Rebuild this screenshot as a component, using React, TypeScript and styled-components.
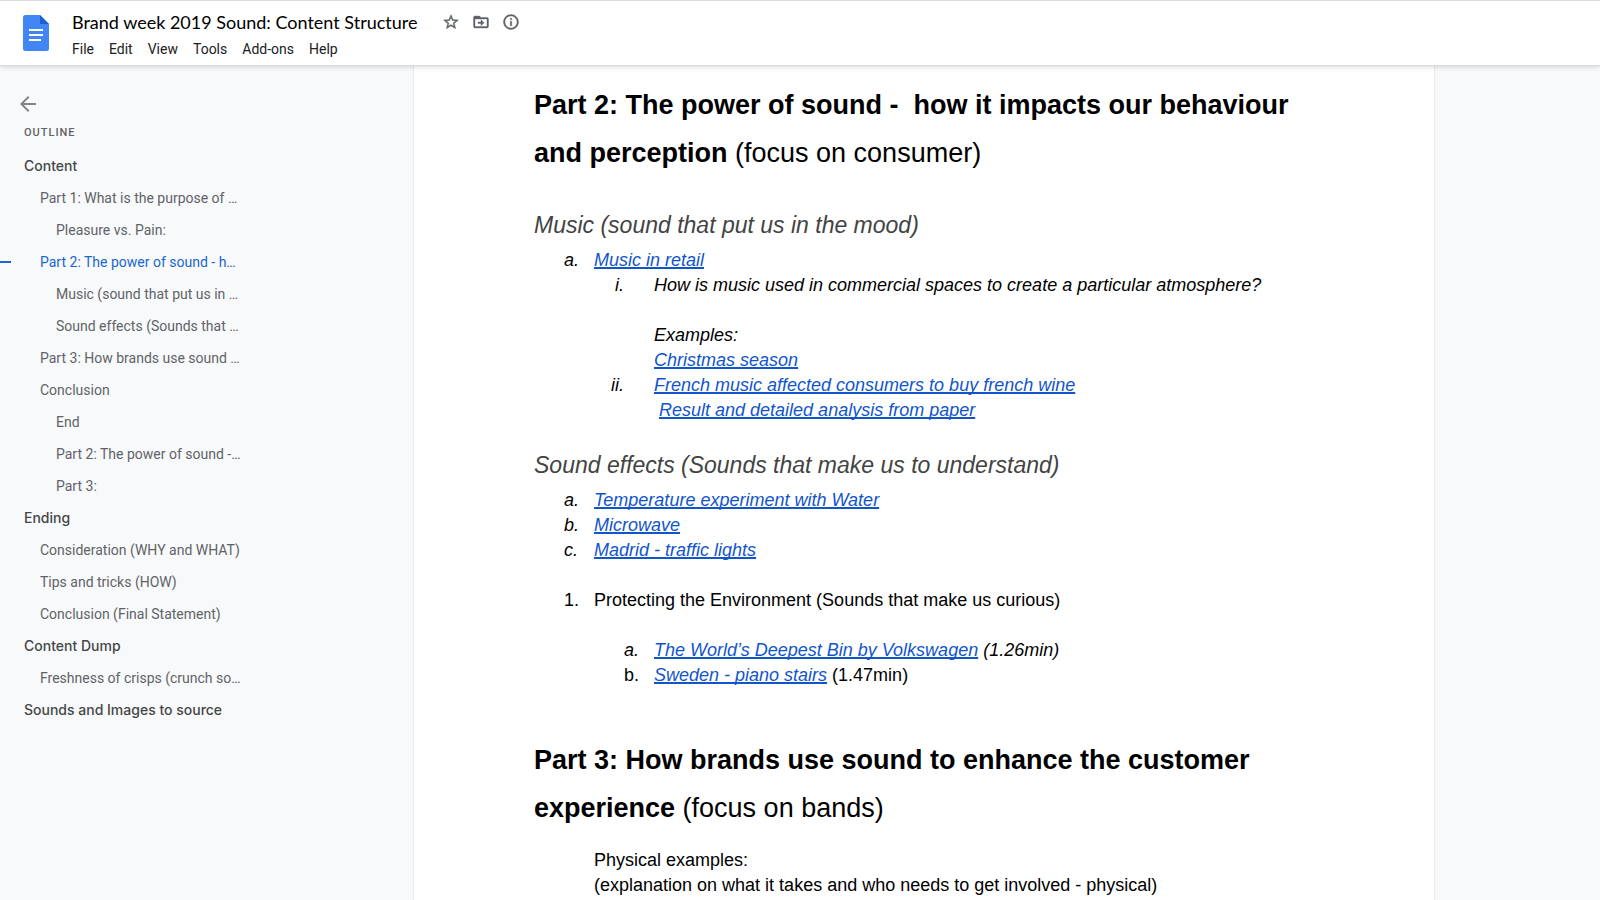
import React from "react";
import styled, { createGlobalStyle } from "styled-components";

const GlobalStyle = createGlobalStyle`
  * { box-sizing: border-box; }
  body { margin: 0; background: #f8f9fa; font-family: Roboto, sans-serif; }
  h1, h2, h3, p, ul, ol { margin: 0; padding: 0; font-weight: 400; }
  ul, ol { list-style: none; }
`;

const Shell = styled.div`
  min-height: 100vh;
  display: flex;
  flex-direction: column;
`;

const Header = styled.header`
  position: relative;
  display: flex;
  align-items: center;
  height: 66px;
  padding: 0 23px;
  gap: 23px;
  background: #fff;
  border-top: 1px solid #dadce0;
  border-bottom: 1px solid #dadce0;
  box-shadow: 0 1px 5px rgba(60, 64, 67, 0.2);
`;

const Logo = styled.svg`
  display: block;
  width: 26px;
  height: 36px;
`;

const TitleBlock = styled.div`
  display: flex;
  flex-direction: column;
  gap: 5px;
  margin-top: 3px;
`;

const TitleRow = styled.div`
  display: flex;
  align-items: center;
  height: 24px;
  gap: 24px;
`;

const Title = styled.h1`
  font: 400 18px/24px Lato, sans-serif;
  color: #000;
  white-space: nowrap;
`;

const TitleActions = styled.div`
  display: flex;
  gap: 12px;
`;

const IconButton = styled.button`
  display: flex;
  padding: 0;
  border: 0;
  background: none;
  color: #5f6368;
  cursor: pointer;
  svg { fill: currentColor; }
`;

const MenuBar = styled.nav`
  display: flex;
  gap: 15px;
`;

const MenuButton = styled.button`
  padding: 0;
  border: 0;
  background: none;
  font: 400 14px/20px Roboto, sans-serif;
  color: #202124;
  cursor: pointer;
`;

const Workspace = styled.div`
  display: flex;
  flex: 1;
`;

const Outline = styled.aside`
  flex: 0 0 248px;
  padding-top: 26px;
  color: #5f6368;
`;

const BackButton = styled(IconButton)`
  margin-left: 16px;
  color: #80868b;
`;

const OutlineTitle = styled.h2`
  margin: 9px 0 9px 24px;
  font: 500 11px/16px Roboto, sans-serif;
  letter-spacing: 1px;
`;

const OutlineLink = styled.a<{ $level: number; $active?: boolean }>`
  position: relative;
  display: block;
  padding-left: ${(p) => 8 + p.$level * 16}px;
  overflow: hidden;
  text-overflow: ellipsis;
  white-space: nowrap;
  text-decoration: none;
  font: ${(p) => (p.$level === 1 ? "500 14px/32px Inter" : "400 14px/32px Roboto")}, sans-serif;
  color: ${(p) => (p.$active ? "#1967d2" : p.$level === 1 ? "#444746" : "#5f6368")};
  &::before {
    content: "";
    display: ${(p) => (p.$active ? "block" : "none")};
    position: absolute;
    left: 0;
    top: 15px;
    width: 11px;
    height: 2px;
    background: #1967d2;
  }
`;

const Desk = styled.main`
  flex: 1;
  display: flex;
  justify-content: center;
`;

const Page = styled.article`
  width: 1020px;
  padding: 15px 120px 0;
  background: #fff;
  box-shadow: 0 0 0 1px #ebebeb, 0 0 2px 1px rgba(0, 0, 0, 0.04);
  font-family: "Liberation Sans", Arial, sans-serif;
  color: #000;
`;

const PartHeading = styled.h2`
  font-size: 27px;
  line-height: 48px;
  white-space: pre-wrap;
`;

const TopicHeading = styled.h3`
  margin-bottom: 7px;
  font-size: 23px;
  line-height: 32px;
  font-style: italic;
  color: #434343;
`;

const Topic = styled.section<{ $gap: number }>`
  margin-top: ${(p) => p.$gap}px;
`;

const Part = styled.section`
  & + & { margin-top: 48px; }
`;

const List = styled.ol`
  font-size: 18px;
  line-height: 25px;
`;

const ItemRow = styled.li<{ $indent: number; $plain?: boolean; $space?: boolean }>`
  display: flex;
  padding-left: ${(p) => p.$indent}px;
  margin-top: ${(p) => (p.$space ? 25 : 0)}px;
  font-style: ${(p) => (p.$plain ? "normal" : "italic")};
`;

const Marker = styled.span`
  flex: 0 0 30px;
`;

const RomanMarker = styled.span`
  flex: 0 0 60px;
  padding-right: 30px;
  text-align: right;
`;

const ItemBody = styled.div`
  flex: 1;
  white-space: pre-wrap;
`;

const DocLink = styled.a`
  color: #1155cc;
  font-style: italic;
  text-decoration: underline;
  text-decoration-thickness: 2px;
  text-underline-offset: 1px;
  text-decoration-skip-ink: none;
`;

const Paragraph = styled.p<{ $gap?: number }>`
  margin-top: ${(p) => p.$gap ?? 0}px;
  font-size: 18px;
  line-height: 25px;
`;

const Note = styled.div`
  margin: 16px 0 0 60px;
`;

interface ItemProps {
  marker: string;
  indent: number;
  plain?: boolean;
  roman?: boolean;
  space?: boolean;
  children: React.ReactNode;
}

const Item = ({ marker, indent, plain, roman, space, children }: ItemProps) => {
  const Label = roman ? RomanMarker : Marker;
  return (
    <ItemRow $indent={indent} $plain={plain} $space={space}>
      <Label>{marker}</Label>
      <ItemBody>{children}</ItemBody>
    </ItemRow>
  );
};

const menus = ["File", "Edit", "View", "Tools", "Add-ons", "Help"];

const outline: { text: string; level: number; active?: boolean }[] = [
  { text: "Content", level: 1 },
  { text: "Part 1: What is the purpose of …", level: 2 },
  { text: "Pleasure vs. Pain:", level: 3 },
  { text: "Part 2: The power of sound - h…", level: 2, active: true },
  { text: "Music (sound that put us in …", level: 3 },
  { text: "Sound effects (Sounds that …", level: 3 },
  { text: "Part 3: How brands use sound …", level: 2 },
  { text: "Conclusion", level: 2 },
  { text: "End", level: 3 },
  { text: "Part 2: The power of sound -…", level: 3 },
  { text: "Part 3:", level: 3 },
  { text: "Ending", level: 1 },
  { text: "Consideration (WHY and WHAT)", level: 2 },
  { text: "Tips and tricks (HOW)", level: 2 },
  { text: "Conclusion (Final Statement)", level: 2 },
  { text: "Content Dump", level: 1 },
  { text: "Freshness of crisps (crunch so…", level: 2 },
  { text: "Sounds and Images to source", level: 1 },
];

const icons = {
  Star: "M22 9.24l-7.19-.62L12 2 9.19 8.63 2 9.24l5.46 4.73L5.82 21 12 17.27 18.18 21l-1.63-7.03L22 9.24zM12 15.4l-3.76 2.27 1-4.28-3.32-2.88 4.38-.38L12 6.1l1.71 4.04 4.38.38-3.32 2.88 1 4.28L12 15.4z",
  Move: "M20 6h-8l-2-2H4c-1.1 0-1.99.9-1.99 2L2 18c0 1.1.9 2 2 2h16c1.1 0 2-.9 2-2V8c0-1.1-.9-2-2-2zm0 12H4V8h16v10zM12 12H8v2h4v3l4-4-4-4z",
  Details: "M11 7h2v2h-2zm0 4h2v6h-2zm1-9C6.48 2 2 6.48 2 12s4.48 10 10 10 10-4.48 10-10S17.52 2 12 2zm0 18c-4.41 0-8-3.59-8-8s3.59-8 8-8 8 3.59 8 8-3.59 8-8 8z",
};

export default function App() {
  return (
    <Shell>
      <GlobalStyle />
      <Header>
        <Logo viewBox="0 0 26 36" aria-hidden="true">
          <path d="M2.5 0H17l9 9v24.500a2.500 2.500 0 0 1-2.500 2.500h-21A2.500 2.500 0 0 1 0 33.500v-31A2.500 2.500 0 0 1 2.500 0z" fill="#4285f4" />
          <path d="M17 0l9 9h-9z" fill="#1f5fce" />
          <path d="M6 14h14v2H6zM6 19h14v2H6zM6 24h12v2H6z" fill="#fff" />
        </Logo>
        <TitleBlock>
          <TitleRow>
            <Title>Brand week 2019 Sound: Content Structure</Title>
            <TitleActions>
              {Object.entries(icons).map(([name, d]) => (
                <IconButton key={name} aria-label={name}>
                  <svg width="18" height="18" viewBox="0 0 24 24"><path d={d} stroke="currentColor" strokeWidth="0.5" /></svg>
                </IconButton>
              ))}
            </TitleActions>
          </TitleRow>
          <MenuBar>
            {menus.map((m) => <MenuButton key={m}>{m}</MenuButton>)}
          </MenuBar>
        </TitleBlock>
      </Header>
      <Workspace>
        <Outline>
          <BackButton aria-label="Close outline">
            <svg width="24" height="24" viewBox="0 0 24 24">
              <path d="M20 11H7.83l5.59-5.59L12 4l-8 8 8 8 1.41-1.41L7.83 13H20v-2z" />
            </svg>
          </BackButton>
          <OutlineTitle>OUTLINE</OutlineTitle>
          <ul>
            {outline.map((o) => (
              <li key={o.text}>
                <OutlineLink href="#" $level={o.level} $active={o.active}>{o.text}</OutlineLink>
              </li>
            ))}
          </ul>
        </Outline>
        <Desk>
          <Page>
            <Part>
              <PartHeading><b>Part 2: The power of sound -  how it impacts our behaviour and perception</b> (focus on consumer)</PartHeading>
              <Topic $gap={32}>
                <TopicHeading>Music (sound that put us in the mood)</TopicHeading>
                <List>
                  <Item marker="a." indent={30}><DocLink href="#">Music in retail</DocLink></Item>
                  <Item marker="i." indent={60} roman>
                    How is music used in commercial spaces to create a particular atmosphere?
                    <Paragraph $gap={25}>Examples:</Paragraph>
                    <Paragraph><DocLink href="#">Christmas season</DocLink></Paragraph>
                  </Item>
                  <Item marker="ii." indent={60} roman>
                    <DocLink href="#">French music affected consumers to buy french wine</DocLink>
                    <Paragraph>{" "}<DocLink href="#">Result and detailed analysis from paper</DocLink></Paragraph>
                  </Item>
                </List>
              </Topic>
              <Topic $gap={26}>
                <TopicHeading>Sound effects (Sounds that make us to understand)</TopicHeading>
                <List>
                  <Item marker="a." indent={30}><DocLink href="#">Temperature experiment with Water</DocLink></Item>
                  <Item marker="b." indent={30}><DocLink href="#">Microwave</DocLink></Item>
                  <Item marker="c." indent={30}><DocLink href="#">Madrid - traffic lights</DocLink></Item>
                  <Item marker="1." indent={30} plain space>Protecting the Environment (Sounds that make us curious)</Item>
                  <Item marker="a." indent={90} space><DocLink href="#">The World’s Deepest Bin by Volkswagen</DocLink> (1.26min)</Item>
                  <Item marker="b." indent={90} plain><DocLink href="#">Sweden - piano stairs</DocLink> (1.47min)</Item>
                </List>
              </Topic>
            </Part>
            <Part>
              <PartHeading><b>Part 3: How brands use sound to enhance the customer experience</b> (focus on bands)</PartHeading>
              <Note>
                <Paragraph>Physical examples:</Paragraph>
                <Paragraph>(explanation on what it takes and who needs to get involved - physical)</Paragraph>
              </Note>
            </Part>
          </Page>
        </Desk>
      </Workspace>
    </Shell>
  );
}
